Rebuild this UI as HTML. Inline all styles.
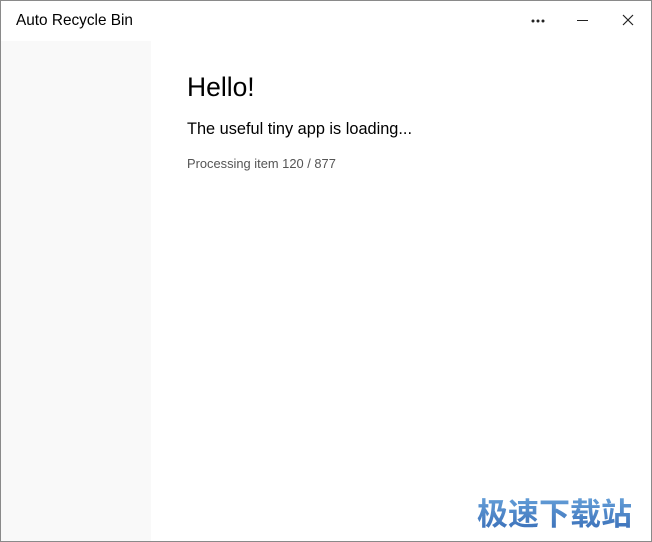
<!DOCTYPE html>
<html><head><meta charset="utf-8"><style>
html,body{margin:0;padding:0;}
body{width:652px;height:542px;position:relative;overflow:hidden;background:#fff;font-family:"Liberation Sans",sans-serif;}
.win{position:absolute;left:0;top:0;width:650px;height:540px;border:1px solid #8a8a8a;}
.side{position:absolute;left:1px;top:41px;width:150px;height:500px;background:#f9f9f9;}
.t{position:absolute;white-space:nowrap;color:#000;transform-origin:left;}
.wm{position:absolute;left:477px;top:492px;font-family:"Noto Sans CJK SC",sans-serif;font-weight:bold;font-size:31px;background:linear-gradient(#6aa5dc,#3a6fb8);-webkit-background-clip:text;background-clip:text;color:transparent;line-height:40px;}
</style></head><body>
<div class="win"></div>
<div class="side"></div>
<div class="t" style="left:16px;top:12px;font-size:16px;transform:scaleX(0.96);">Auto Recycle Bin</div>
<svg style="position:absolute;left:530px;top:17px" width="16" height="8"><circle cx="3" cy="4" r="1.5" fill="#222"/><circle cx="8" cy="4" r="1.5" fill="#222"/><circle cx="13" cy="4" r="1.5" fill="#222"/></svg>
<div style="position:absolute;left:577px;top:20px;width:11px;height:1px;background:#222"></div>
<svg style="position:absolute;left:622px;top:14px" width="12" height="12"><path d="M1 1L11 11M11 1L1 11" stroke="#222" stroke-width="1.2"/></svg>
<div class="t" style="left:187px;top:72px;font-size:27px;transform:scaleX(0.98);">Hello!</div>
<div class="t" style="left:187px;top:119px;font-size:17px;transform:scaleX(0.96);">The useful tiny app is loading...</div>
<div class="t" style="left:187px;top:157px;font-size:12.5px;color:#555;transform:scaleX(1.03);">Processing item 120 / 877</div>
<div class="wm">极速下载站</div>
</body></html>
